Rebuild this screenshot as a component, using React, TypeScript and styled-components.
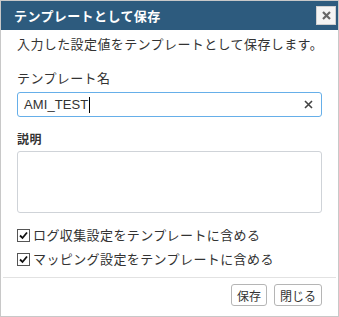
import React from "react"
import styled, { createGlobalStyle } from "styled-components"

const GlobalStyle = createGlobalStyle`
  html, body {
    margin: 0;
    padding: 0;
    background: #ffffff;
  }
  body {
    font-family: "Noto Sans CJK JP", "Liberation Sans", sans-serif;
    color: #333333;
  }
`

const Dialog = styled.div`
  width: 339px;
  height: 317px;
  box-sizing: border-box;
  border: 1px solid #c8c8c8;
  background: #ffffff;
  display: flex;
  flex-direction: column;
  overflow: hidden;
`

const TitleBar = styled.div`
  flex-shrink: 0;
  height: 29px;
  background: #2d5b7e;
  display: flex;
  align-items: center;
  justify-content: space-between;
  padding: 0 2px 0 13px;
`

const Title = styled.span`
  color: #ffffff;
  font-size: 13px;
  font-weight: 700;
  letter-spacing: 0.4px;
  white-space: nowrap;
`

const CloseButton = styled.button`
  width: 20px;
  height: 19px;
  box-sizing: border-box;
  border: 1px solid #d0d0d0;
  background: #f4f4f4;
  padding: 0;
  display: flex;
  align-items: center;
  justify-content: center;
  color: #666666;
`

const Body = styled.div`
  flex: 1;
  padding: 5px 16px 0 16px;
  display: flex;
  flex-direction: column;
`

const Lead = styled.p`
  margin: 0;
  font-size: 13px;
  line-height: 18px;
  letter-spacing: 0.4px;
  white-space: nowrap;
`

const Label = styled.div<{ $bold?: boolean }>`
  font-size: ${({ $bold }) => ($bold ? "12px" : "13px")};
  font-weight: ${({ $bold }) => ($bold ? 700 : 400)};
  line-height: 18px;
  letter-spacing: 0.4px;
  margin-top: ${({ $bold }) => ($bold ? "13px" : "16px")};
  margin-bottom: ${({ $bold }) => ($bold ? "3px" : "5px")};
`

const TextField = styled.div`
  height: 25px;
  box-sizing: border-box;
  border: 1px solid #66afe9;
  border-radius: 3px;
  display: flex;
  align-items: center;
  padding: 0 8px 0 6px;
  font-family: "Liberation Sans", "Noto Sans CJK JP", sans-serif;
  font-size: 13px;
  color: #333333;
`

const Value = styled.span`
  letter-spacing: 0.1px;
`

const Caret = styled.span`
  display: inline-block;
  width: 1px;
  height: 16px;
  background: #000000;
  margin-left: 1px;
`

const ClearButton = styled.span`
  margin-left: auto;
  display: flex;
  color: #444444;
`

const TextArea = styled.div`
  height: 62px;
  box-sizing: border-box;
  border: 1px solid #cfd3d8;
  border-radius: 3px;
`

const CheckList = styled.div`
  margin-top: 12px;
  display: flex;
  flex-direction: column;
  gap: 4px;
`

const CheckRow = styled.label`
  display: flex;
  align-items: center;
  gap: 3px;
  font-size: 13px;
  line-height: 20px;
  letter-spacing: 0.4px;
  white-space: nowrap;
`

const CheckBox = styled.span`
  width: 11px;
  height: 11px;
  border: 1px solid #555555;
  background: #ffffff;
  display: flex;
  align-items: center;
  justify-content: center;
`

const Footer = styled.div`
  flex-shrink: 0;
  margin: 0 2px;
  border-top: 1px solid #e2e2e2;
  padding: 6px 14px 10px 0;
  display: flex;
  justify-content: flex-end;
  gap: 7px;
`

const Button = styled.button`
  height: 22px;
  box-sizing: border-box;
  border: 1px solid #b5b5b5;
  border-radius: 3px;
  background: #ffffff;
  padding: 0 5px;
  font-family: "Noto Sans CJK JP", sans-serif;
  font-size: 12px;
  color: #333333;
`

function Check() {
  return (
    <CheckBox>
      <svg width="9" height="9" viewBox="0 0 9 9">
        <path d="M1 4.5 L3.5 7 L8 1.5" fill="none" stroke="#111" strokeWidth="1.8" />
      </svg>
    </CheckBox>
  )
}

export default function App() {
  return (
    <>
      <GlobalStyle />
      <Dialog>
        <TitleBar>
          <Title>テンプレートとして保存</Title>
          <CloseButton aria-label="close">
            <svg width="9" height="9" viewBox="0 0 9 9">
              <path d="M1 1 L8 8 M8 1 L1 8" stroke="#666" strokeWidth="2.2" />
            </svg>
          </CloseButton>
        </TitleBar>
        <Body>
          <Lead>入力した設定値をテンプレートとして保存します。</Lead>
          <Label>テンプレート名</Label>
          <TextField>
            <Value>AMI_TEST</Value>
            <Caret />
            <ClearButton>
              <svg width="9" height="9" viewBox="0 0 9 9">
                <path d="M1 1 L8 8 M8 1 L1 8" stroke="#444" strokeWidth="1.6" />
              </svg>
            </ClearButton>
          </TextField>
          <Label $bold>説明</Label>
          <TextArea />
          <CheckList>
            <CheckRow>
              <Check />
              ログ収集設定をテンプレートに含める
            </CheckRow>
            <CheckRow>
              <Check />
              マッピング設定をテンプレートに含める
            </CheckRow>
          </CheckList>
        </Body>
        <Footer>
          <Button>保存</Button>
          <Button>閉じる</Button>
        </Footer>
      </Dialog>
    </>
  )
}
